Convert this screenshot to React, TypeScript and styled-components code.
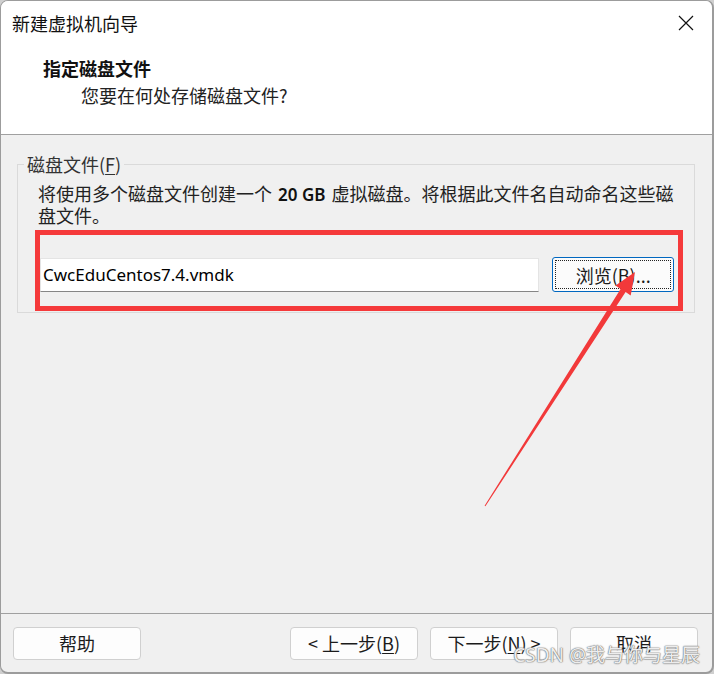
import React from "react";
import styled, { createGlobalStyle } from "styled-components";

const Global = createGlobalStyle`
  html, body { margin: 0; padding: 0; background: #cfcfcf; }
  body { font-family: "Noto Sans", "Noto Sans CJK SC", sans-serif; }
  * { box-sizing: border-box; }
`;

const Window = styled.div`
  position: relative;
  width: 714px;
  height: 674px;
  border: 1px solid #9c9c9c;
  border-right-width: 2px;
  border-bottom-width: 2px;
  border-radius: 8px;
  overflow: hidden;
  background: #f0f0f0;
  display: flex;
  flex-direction: column;
  color: #111;
  font-family: "Noto Sans", "Noto Sans CJK SC", sans-serif;
`;

const Header = styled.div`
  background: #ffffff;
  height: 134px;
  border-bottom: 1px solid #a0a0a0;
  flex: none;
`;

const TitleBar = styled.div`
  height: 44px;
  display: flex;
  align-items: center;
  justify-content: space-between;
  padding: 0 17px 0 11px;
`;

const Title = styled.div`
  font-family: "Noto Sans CJK SC", sans-serif;
  font-size: 18px;
  line-height: 24px;
  color: #111;
`;

const CloseBox = styled.div`
  width: 18px;
  height: 18px;
  display: flex;
  align-items: center;
  justify-content: center;
`;

const Heading = styled.div`
  margin: 11px 0 0 42px;
  font-family: "Noto Sans CJK SC", sans-serif;
  font-size: 18px;
  font-weight: 700;
  line-height: 24px;
  color: #111;
`;

const SubHeading = styled.div`
  margin: 3px 0 0 80px;
  font-family: "Noto Sans CJK SC", sans-serif;
  font-size: 18px;
  line-height: 24px;
  color: #222;
`;

const Body = styled.div`
  flex: 1;
  padding: 18px 17px 0 16px;
`;

const Group = styled.fieldset`
  margin: 0;
  border: 1px solid #dadada;
  padding: 8px 0 1px 0;
  min-width: 0;
`;

const Legend = styled.legend`
  margin-left: 6px;
  padding: 0 3px 0 3px;
  font-family: "Noto Sans CJK SC", sans-serif;
  font-size: 18px;
  line-height: 22px;
  color: #333;
`;

const Key = styled.span`
  text-decoration: underline;
  text-underline-offset: 2px;
`;

const Description = styled.div`
  padding-left: 20px;
  font-family: "Noto Sans CJK SC", sans-serif;
  font-size: 18px;
  line-height: 21px;
  color: #222;
  white-space: nowrap;
`;

const Size = styled.span`
  font-family: "Noto Sans", sans-serif;
  font-weight: 600;
  font-size: 17px;
  color: #111;
  padding: 0 2px;
`;

const RedFrame = styled.div`
  margin: 4px 11px 0 17px;
  border: 5px solid #f53a3b;
  padding: 22px 4px 14px 0;
  display: flex;
  align-items: center;
  gap: 13px;
`;

const PathInput = styled.div`
  width: 501px;
  height: 34px;
  background: #ffffff;
  border: 1px solid #e4e4e4;
  border-bottom: 1px solid #868686;
  display: flex;
  align-items: center;
  padding-left: 2px;
  font-family: "Noto Sans", "Noto Sans CJK SC", sans-serif;
  font-size: 17px;
  color: #000;
`;

const BrowseButton = styled.div`
  position: relative;
  width: 122px;
  height: 35px;
  border: 1px solid #0067c0;
  border-radius: 3px;
  background: #fbfbfb;
  display: flex;
  align-items: center;
  justify-content: center;
  font-family: "Noto Sans CJK SC", sans-serif;
  font-size: 18px;
  color: #1a1a1a;
  &::after {
    content: "";
    position: absolute;
    inset: 2px;
    border: 1px dotted #222;
  }
`;

const Footer = styled.div`
  flex: none;
  border-top: 1px solid #a0a0a0;
  height: 59px;
  display: flex;
  align-items: center;
  padding: 0 14px 0 12px;
`;

const Spacer = styled.div`
  flex: 1;
`;

const Button = styled.div<{ $gap?: number }>`
  width: 128px;
  height: 33px;
  margin-left: ${(p) => p.$gap ?? 0}px;
  border: 1px solid #d0d0d0;
  border-radius: 4px;
  background: #fdfdfd;
  display: flex;
  align-items: center;
  justify-content: center;
  font-family: "Noto Sans CJK SC", sans-serif;
  font-size: 18px;
  color: #1b1b1b;
`;

const Overlay = styled.svg`
  position: absolute;
  left: -1px;
  top: -1px;
  width: 714px;
  height: 674px;
  pointer-events: none;
`;

const Watermark = styled.div`
  position: absolute;
  right: 12px;
  bottom: 5px;
  font-family: "Noto Sans", "Noto Sans CJK SC", sans-serif;
  font-size: 19px;
  line-height: 24px;
  color: rgba(255, 255, 255, 0.9);
  text-shadow: 0 0 1px #707070, 0 0 1px #707070, 0 0 2px #a0a0a0;
  pointer-events: none;
`;

export default function App() {
  return (
    <>
      <Global />
      <Window>
        <Header>
          <TitleBar>
            <Title>新建虚拟机向导</Title>
            <CloseBox>
              <svg width="16" height="16" viewBox="0 0 16 16">
                <path d="M1 1 L15 15 M15 1 L1 15" stroke="#111" strokeWidth="1.2" fill="none" />
              </svg>
            </CloseBox>
          </TitleBar>
          <Heading>指定磁盘文件</Heading>
          <SubHeading>您要在何处存储磁盘文件?</SubHeading>
        </Header>
        <Body>
          <Group>
            <Legend>
              磁盘文件(<Key>F</Key>)
            </Legend>
            <Description>
              将使用多个磁盘文件创建一个 <Size>20 GB</Size> 虚拟磁盘。将根据此文件名自动命名这些磁
              <br />
              盘文件。
            </Description>
            <RedFrame>
              <PathInput>CwcEduCentos7.4.vmdk</PathInput>
              <BrowseButton>
                浏览(<Key>B</Key>)...
              </BrowseButton>
            </RedFrame>
          </Group>
        </Body>
        <Footer>
          <Button>帮助</Button>
          <Spacer />
          <Button>
            &lt; 上一步(<Key>B</Key>)
          </Button>
          <Button $gap={12}>
            下一步(<Key>N</Key>) &gt;
          </Button>
          <Button $gap={12}>取消</Button>
        </Footer>
        <Overlay viewBox="0 0 714 674">
          <polygon
            points="484.6,505.7 620.6,288.9 615.5,285.6 635,272 630.7,295.4 625.6,292.1 485.4,506.3"
            fill="#f2393a"
          />
        </Overlay>
        <Watermark>CSDN @我与你与星辰</Watermark>
      </Window>
    </>
  );
}
